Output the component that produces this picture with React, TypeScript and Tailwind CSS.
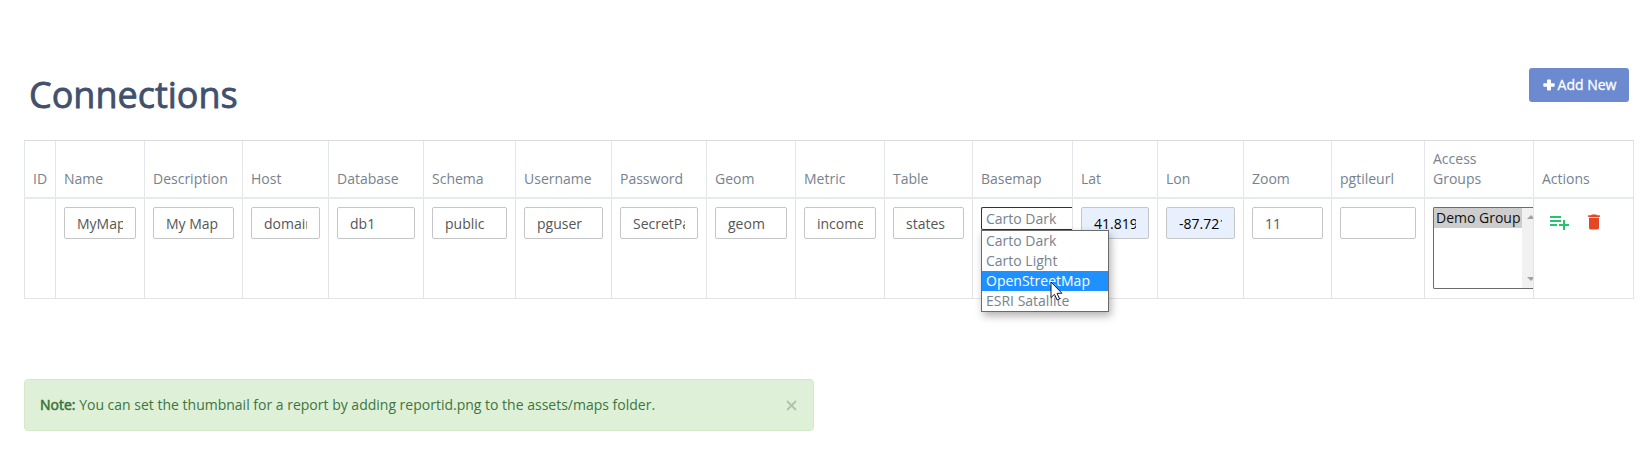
import React from "react";
import { MdDelete, MdPlaylistAdd } from "react-icons/md";

type Column = { label: string; value?: string; autofilled?: boolean };

const columns: Column[] = [
  { label: "ID" },
  { label: "Name", value: "MyMap" },
  { label: "Description", value: "My Map" },
  { label: "Host", value: "domain.com" },
  { label: "Database", value: "db1" },
  { label: "Schema", value: "public" },
  { label: "Username", value: "pguser" },
  { label: "Password", value: "SecretPassword" },
  { label: "Geom", value: "geom" },
  { label: "Metric", value: "income" },
  { label: "Table", value: "states" },
  { label: "Basemap" },
  { label: "Lat", value: "41.8193", autofilled: true },
  { label: "Lon", value: "-87.721", autofilled: true },
  { label: "Zoom", value: "11" },
  { label: "pgtileurl", value: "" },
  { label: "Access Groups" },
  { label: "Actions" },
];

const rowGrid =
  "grid grid-cols-[31px_89px_98px_86px_95px_92px_96px_95px_89px_89px_88px_100px_85px_86px_88px_93px_109px_100px]";

const basemaps = ["Carto Dark", "Carto Light", "OpenStreetMap", "ESRI Satallite"];

function TextField({ value, autofilled }: { value: string; autofilled?: boolean }) {
  return (
    <input
      readOnly
      value={value}
      className={
        autofilled
          ? "block h-8 w-full rounded-[2px] border border-[#c5c6c7] bg-[#e8f0fe] px-3 text-sm text-black outline-none"
          : "block h-8 w-full rounded-[2px] border border-[#c5c6c7] bg-white px-3 text-sm text-[#565656] outline-none"
      }
    />
  );
}

function Cursor() {
  return (
    <svg className="absolute left-[68px] top-[50px]" width="13" height="20" viewBox="0 0 13 20">
      <path
        d="M1 1 L1 16.6 L4.5 13.3 L7.1 19 L9.6 17.9 L7.1 12.4 L11.9 12.2 Z"
        fill="#fff"
        stroke="#15152b"
        strokeWidth="1"
      />
    </svg>
  );
}

function BasemapSelect() {
  return (
    <div className="relative -mr-2">
      <div className="h-[23px] overflow-hidden rounded-l-[2px] border border-r-0 border-[#333] bg-white pl-1 pt-px leading-5">
        Carto Dark
      </div>
      <div className="absolute left-0 top-[23px] z-10 w-32 border border-[#6b6b6b] bg-white shadow-[2px_4px_8px_rgba(0,0,0,0.3)]">
        {basemaps.map((name) => (
          <div
            key={name}
            className={
              name === "OpenStreetMap"
                ? "h-5 bg-[#1e90ff] pl-1 leading-5 text-white"
                : "h-5 pl-1 leading-5"
            }
          >
            {name}
          </div>
        ))}
        <Cursor />
      </div>
    </div>
  );
}

function GroupList() {
  return (
    <div className="-mr-2 flex h-[82px] rounded-l-[2px] border border-r-0 border-[#6b6b6b] bg-white">
      <div className="w-[88px] shrink-0">
        <div className="h-5 whitespace-nowrap bg-[#cdcdcd] pl-0.5 leading-5 text-[#101010]">
          Demo Group
        </div>
      </div>
      <div className="flex flex-1 flex-col items-end justify-between overflow-hidden bg-[#f1f1f1] py-[7px]">
        <svg width="6" height="4" viewBox="0 0 6 4">
          <path d="M0 4 L4 0 L8 4 Z" fill="#a3a3a3" />
        </svg>
        <svg width="6" height="4" viewBox="0 0 6 4">
          <path d="M0 0 L4 4 L8 0 Z" fill="#a3a3a3" />
        </svg>
      </div>
    </div>
  );
}

function Cell({ column }: { column: Column }) {
  if (column.label === "Basemap") return <BasemapSelect />;
  if (column.label === "Access Groups") return <GroupList />;
  if (column.label === "Actions") {
    return (
      <div className="flex gap-[12.5px] pl-[5px] pt-[3px]">
        <MdPlaylistAdd size={24} className="text-[#26c56d]" />
        <MdDelete size={20} className="mt-[1.5px] text-[#e34724]" />
      </div>
    );
  }
  if (column.value === undefined) return null;
  return <TextField value={column.value} autofilled={column.autofilled} />;
}

export default function App() {
  return (
    <div className="h-[449px] overflow-hidden bg-white pl-6 pt-[68px] font-['Open_Sans',sans-serif] text-sm text-[#76838f]">
      <header className="flex h-[72px] w-[1605px] items-start justify-between pl-[5px]">
        <h1 className="pt-[7px] text-[36px] leading-[40px] text-[#42506b] [-webkit-text-stroke:0.8px_#42506b]">
          Connections
        </h1>
        <button className="flex h-[34px] w-[100px] items-center justify-center gap-[3px] whitespace-nowrap rounded-[3px] bg-[#6c8ad0] pl-px text-sm text-white [-webkit-text-stroke:0.3px_white]">
          <svg width="12" height="12" viewBox="0 0 12 12" className="-mt-px">
            <path
              d="M4.8 0.5h2.4a.8.8 0 0 1 .8.8v2.9h2.9a.8.8 0 0 1 .8.8v2a.8.8 0 0 1-.8.8H8v2.9a.8.8 0 0 1-.8.8H4.8a.8.8 0 0 1-.8-.8V7.8H1.1a.8.8 0 0 1-.8-.8V5a.8.8 0 0 1 .8-.8H4V1.3a.8.8 0 0 1 .8-.8z"
              fill="#fff"
              stroke="none"
            />
          </svg>
          Add New
        </button>
      </header>

      <div className="w-[1610px] border-b border-r border-t border-[#e4e4e4] border-t-[#dcdcdc]">
        <div className={`${rowGrid} h-[58px] border-b-2 border-[#e6ebef]`}>
          {columns.map((column) => (
            <div key={column.label} className="flex items-end border-l border-[#e4e7ea] px-2 pb-2 leading-5">
              {column.label}
            </div>
          ))}
        </div>
        <div className={`${rowGrid} h-[99px]`}>
          {columns.map((column) => (
            <div key={column.label} className="border-l border-[#e4e4e4] px-2 pt-2">
              <Cell column={column} />
            </div>
          ))}
        </div>
      </div>

      <div className="mt-20 flex h-[52px] w-[790px] items-center justify-between rounded-[4px] border border-[#d6e9c6] bg-[#dff0d8] px-[15px] text-[#3c763d]">
        <p>
          <strong className="font-normal [-webkit-text-stroke:0.6px_#3c763d]">Note:</strong> You can set the thumbnail
          for a report by adding reportid.png to the assets/maps folder.
        </p>
        <button className="mr-[1px]" aria-label="Close">
          <svg width="11" height="11" viewBox="0 0 11 11">
            <path d="M1 1 L10 10 M10 1 L1 10" stroke="#b2c0ad" strokeWidth="1.8" />
          </svg>
        </button>
      </div>
    </div>
  );
}
